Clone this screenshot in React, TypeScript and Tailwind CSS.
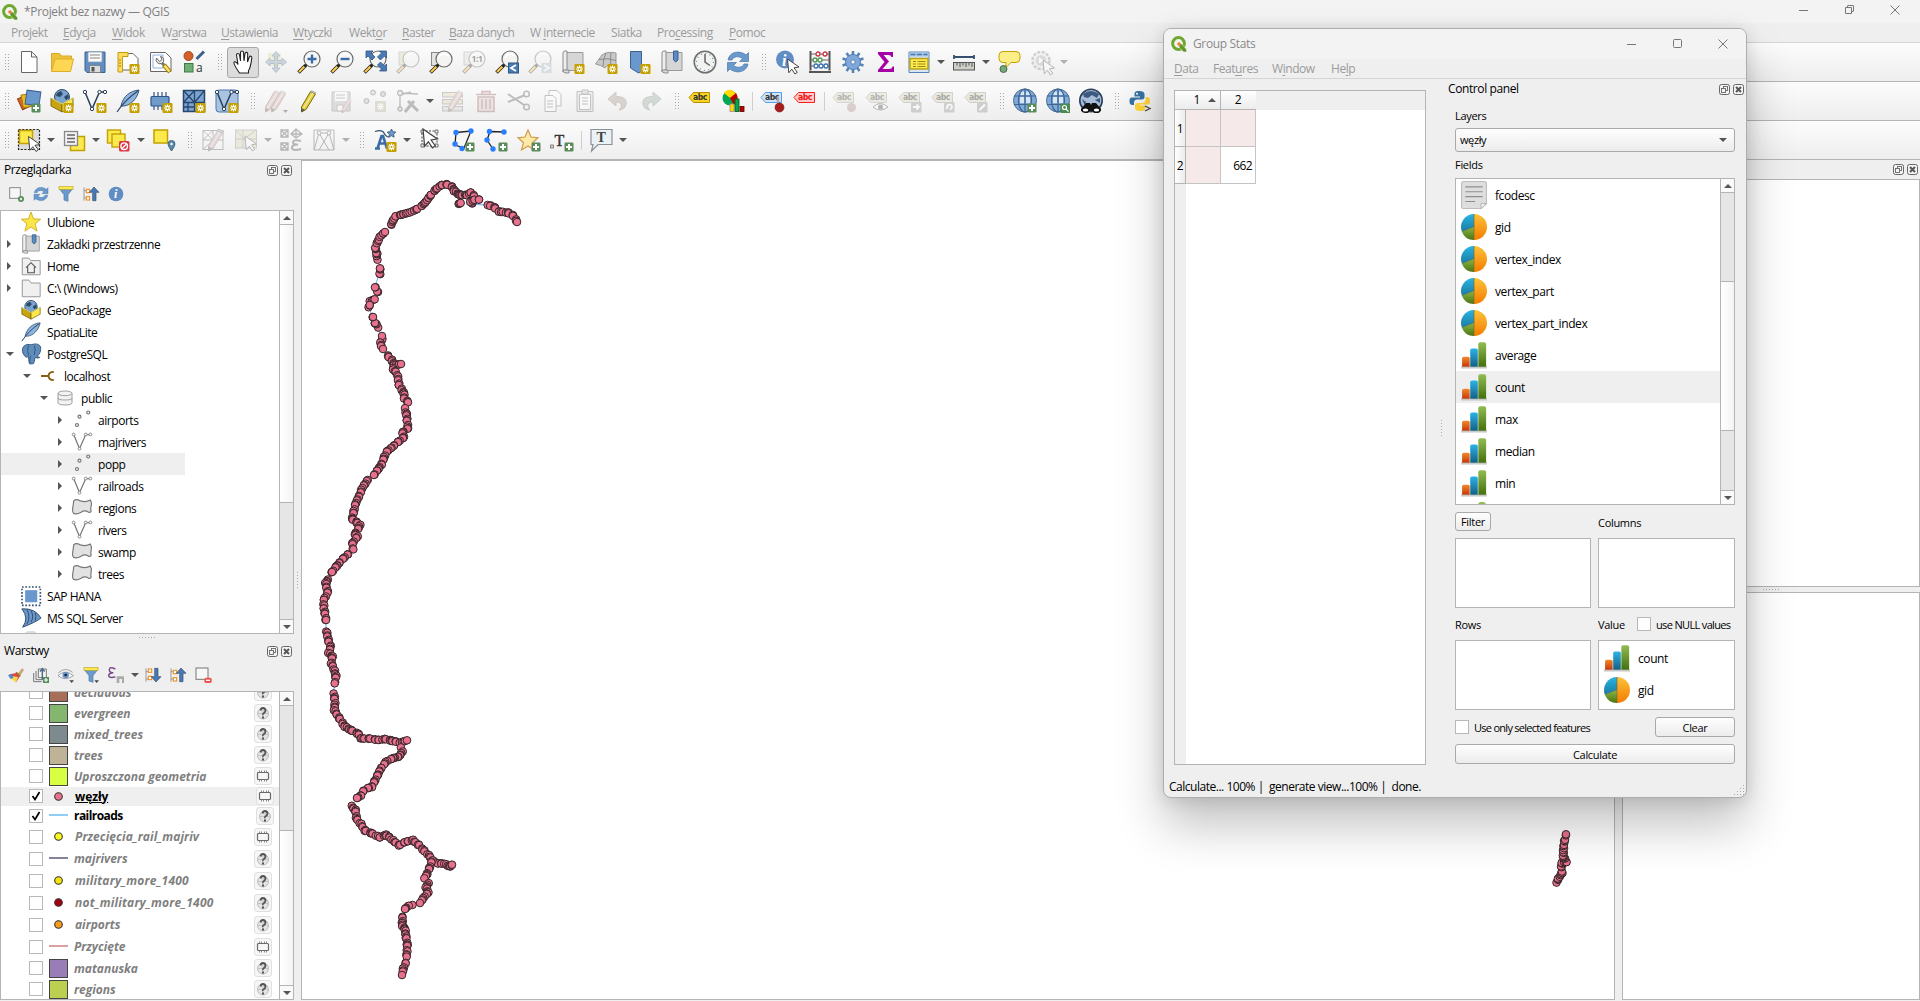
import React from 'react';

type Kids = { children?: React.ReactNode };

/* ---------- shared icon parts (24 unit grid) ---------- */

const StarBadge = () => (
  <g>
    <rect x="13.500" y="14" width="10" height="10" rx="1.200" fill="#c4a000" />
    <path d="M18.500 15.500v7M15 19h7M16 16.500l5 5M21 16.500l-5 5" stroke="#fff" strokeWidth="1.200" />
    <circle cx="18.500" cy="19" r="1" fill="#c4a000" />
  </g>
);
const PlusBadge = () => (
  <g>
    <rect x="14.500" y="14.500" width="9" height="9" rx="1.200" fill="#5a8c5a" />
    <path d="M19 16v6M16 19h6" stroke="#fff" strokeWidth="2" />
  </g>
);
const Lens = () => (
  <g>
    <circle cx="15" cy="9" r="8" fill="#f4f4f2" stroke="#6a6c69" strokeWidth="1.2" />
    <path d="M10 8a5.500 5.500 0 0 1 9.500-2" stroke="#fff" strokeWidth="1.500" fill="none" />
    <path d="M1.500 22.500l7-7" stroke="#222" strokeWidth="3.600" />
    <path d="M2 22l5.500-5.500" stroke="#fcc84a" strokeWidth="2.200" />
    <circle cx="8.500" cy="15.500" r="1.500" fill="#222" />
  </g>
);
const Cursor = ({ x = 0, y = 0 }: { x?: number; y?: number }) => (
  <path transform={`translate(${x} ${y})`} d="M0 0l11.500 8-5 .8 3.300 4.600-2.300 1.600-3.200-4.800-3 3.600z" fill="#fff" stroke="#444" strokeWidth="1" />
);
const Pencil = ({ fill = '#e6cf3c', edge = '#7a6a10' }: { fill?: string; edge?: string }) => (
  <g>
    <path d="M13.500 2.500l5 2.500-9.500 15.500-4.500 2.500 0-5z" fill={fill} stroke={edge} strokeWidth="1" />
    <path d="M16 4L6.500 19" stroke="#fff" strokeWidth="1.200" opacity=".6" />
    <path d="M4.500 23l0-4 3.500 2z" fill="#555" />
    <path d="M13.500 2.500l1-1.500 5 2.500-1 1.500z" fill="#bbb" />
  </g>
);
const Globe = () => (
  <g>
    <circle cx="12" cy="11.500" r="11.500" fill="#7ea9d8" stroke="#4a6f98" strokeWidth="1" />
    <path d="M7 8h4v6H7zM13 8h4v6h-4zM7 2.500h4V6H7zM13 2.500h4V6h-4z" fill="#d6e6f6" />
    <path d="M12 0v23M1 7h22M1 15.500h22" stroke="#3f6590" strokeWidth="1.200" />
    <ellipse cx="12" cy="11.500" rx="6.500" ry="11.500" fill="none" stroke="#3f6590" strokeWidth="1.200" />
  </g>
);
const Tag = ({ fill, edge, ink = '#333', label = 'abc' }: { fill: string; edge: string; ink?: string; label?: string }) => (
  <g>
    <path d="M1 8.500l4.500-5h16v10h-16z" fill={fill} stroke={edge} strokeWidth="1" />
    <text x="5" y="11.300" fontSize="8" fontWeight="700" fill={ink} fontFamily="DejaVu Sans" textLength="14" lengthAdjust="spacingAndGlyphs">{label}</text>
  </g>
);
const Swoosh = () => (
  <g fill="#6a99cc" stroke="#4a79ac" strokeWidth=".7">
    <path d="M2 10C3 4 9 1 15 2.500c2 .5 4 1.500 5 2.500l2.500-2.500v9h-9L16.500 8.500c-4-3-9-2-10.500 1.500z" />
    <path d="M22 14c-1 6-7 9-13 7.500-2-.5-4-1.500-5-2.500L1.500 21.500v-9h9L7.500 15.500c4 3 9 2 10.500-1.500z" />
  </g>
);
const Box = () => (
  <g>
    <circle cx="12" cy="8" r="7.500" fill="#7aa3d0" stroke="#2d4a68" />
    <path d="M7 4l4-2 2 3-3 3-4-1zM14 8l4-3 1 4-3 2z" fill="#2d4a68" />
    <path d="M1 9l11 6v8L1 17z" fill="#c8a510" stroke="#7a6508" strokeWidth=".9" />
    <path d="M23 9l-11 6v8l11-6z" fill="#fbe94e" stroke="#7a6508" strokeWidth=".9" />
    <path d="M1 9l11 6 11-6" fill="none" stroke="#fff8a8" strokeWidth=".8" />
  </g>
);
const Vee = ({ c = '#2b4058' }: { c?: string }) => (
  <g>
    <path d="M2 3l7 17 7.500-17h6" fill="none" stroke={c} strokeWidth="1.500" />
    {[[2, 3], [9, 20], [16.500, 3], [22, 3]].map(([x, y]) => (
      <circle key={x} cx={x} cy={y} r="1.700" fill="#fff" stroke={c} strokeWidth="1" />
    ))}
  </g>
);
const Feather = () => (
  <g>
    <path d="M23 1C14 2 7 7 5 17l3 0C15 16 21 10 23 1z" fill="#8db4de" stroke="#2d4a68" strokeWidth=".9" />
    <path d="M22 2C13 8 7 14 1 23" fill="none" stroke="#2d4a68" strokeWidth="1.200" />
  </g>
);
const Chip = () => (
  <g>
    <path d="M5 3v5M9 3v5M13 3v5M17 3v5M5 16v5M9 16v5M13 16v5M17 16v5M21 3" stroke="#2d5585" strokeWidth="1.200" />
    <rect x="2" y="7.500" width="18" height="9.500" rx="1" fill="#6f9bcb" stroke="#2d5585" strokeWidth="1.200" />
  </g>
);
const Filter = () => (
  <g>
    <path d="M2 4h20l-7 9v10l-6-2v-8z" fill="#6a99cc" stroke="#4a79ac" />
    <rect x="1.500" y="1" width="21" height="4" fill="#fbe94e" stroke="#b9a31c" strokeWidth=".9" />
  </g>
);
const Book = ({ mark = true }: { mark?: boolean }) => (
  <g>
    <path d="M5 2.500h17v18H5z" fill="#d6d6d6" stroke="#9a9a9a" />
    <path d="M2 3q0-2 2-2h2v19q-4 0-4 2z" fill="#eee" stroke="#8a8a8a" />
    <path d="M2 20q0 3 3 3h3v-3z" fill="#ddd" stroke="#8a8a8a" />
    {mark && <path d="M13.500 1H18v9l-2.200 2-2.300-2z" fill="#5b8bc4" stroke="#3a628f" />}
  </g>
);

const ICONS: Record<string, React.ReactNode> = {
  newdoc: <path d="M4.500 1.500h10l5.500 5.500v15.500H4.500zM14.500 1.500V7H20" fill="#fff" stroke="#666" />,
  open: <><path d="M1.500 20.500V3.500h8l2 2.500h10v4" fill="#eac33a" stroke="#d9a92c" /><path d="M1.500 21.500L5 9h18.500l-3 12.500z" fill="#fdd653" stroke="#e0ac2a" /></>,
  save: <><path d="M2 2h20v20.500H4L2 20.500z" fill="#5f8dc4" stroke="#3c618e" /><path d="M5 2h14v10H5z" fill="#fafafa" stroke="#8a9cb0" strokeWidth=".8" /><path d="M7 5h10M7 8h10" stroke="#888" /><path d="M6.500 15.500h11v7h-11z" fill="#dcdcdc" stroke="#777" strokeWidth=".8" /><path d="M8.500 17h3v4.500h-3z" fill="#555" /></>,
  newlayout: <><path d="M5 3.500h12l5 5V20H5z" fill="#fff" stroke="#666" /><path d="M2 2.500h10v4H6.500V22H2z" fill="#fbdc5c" stroke="#c79a14" /><path d="M3 10h2M3 13h2M3 16h2" stroke="#a47c08" /><StarBadge /></>,
  layouts: <><path d="M1.500 2.500h15l5.500 5.500v13.500H1.500z" fill="#fff" stroke="#666" /><path d="M4 5h10v13H4z" fill="none" stroke="#8fb2dd" /><path d="M13 13l3 3" stroke="#777" strokeWidth="3" /><path d="M15 15l6 7" stroke="#a4820c" strokeWidth="4.500" /><path d="M15.500 15.500l5 6" stroke="#fbe36a" strokeWidth="2.400" /><path d="M7.500 8a4 4 0 0 0 5 5.500l2-2a4.200 4.200 0 0 0-3-5l1.500 3-2.500 2z" fill="#ececec" stroke="#666" /></>,
  style: <><circle cx="6.500" cy="6" r="4.500" fill="#d4602c" stroke="#a4431a" /><path d="M14.500 9L22 1.500" stroke="#3a628f" strokeWidth="3" /><rect x="2.500" y="13.500" width="8.500" height="8.500" fill="#6fae74" stroke="#3f7a45" /><text x="14" y="22" fontSize="12" fill="#333" fontFamily="Open Sans">a</text></>,
  hand: <path d="M8.500 23C5 18 2.500 14 3 12.500s2.500-.5 4 2L5.500 5c0-2 2.500-2 3 0l1 6V2.500c0-2 3-2 3 0L13 11l1-7.500c.5-1.800 3-1.300 2.700.500L16.500 12l1.800-5c.8-1.500 2.900-.8 2.500 1C20 14 19.500 18 17.500 20.500V23z" fill="#fff" stroke="#222" strokeWidth="1.100" />,
  pan: <g opacity=".4"><rect x="4" y="3" width="13" height="13" fill="#e5dcae" /><path d="M12 1.500l4 4.500h-2.500v4.500H18V8l4.500 4-4.500 4v-2.500h-4.500V18H16l-4 4.500L8 18h2.500v-4.500H6V16l-4.500-4L6 8v2.500h4.500V6H8z" fill="#8fa2b8" stroke="#607890" /></g>,
  zoomin: <><Lens /><path d="M15 4.500v9M10.500 9h9" stroke="#3c6ca8" strokeWidth="2.400" /></>,
  zoomout: <><Lens /><path d="M10.500 9h9" stroke="#3c6ca8" strokeWidth="2.400" /></>,
  zoomfull: <><Lens /><path d="M3 1h7L8 3l4 4-3 3-4-4-2 2zM23.500 1v7l-2-2-4 4-3-3 4-4-2-2zM23.500 21h-7l2-2-4-4 3-3 4 4 2-2z" fill="#4a7ab4" stroke="#2d5585" strokeWidth=".8" /></>,
  zoomsel: <g opacity=".35"><rect x="3" y="2" width="13" height="13" fill="#ddd6ac" stroke="#999" /><Lens /></g>,
  zoomlayer: <><rect x="2.500" y="2.500" width="12" height="13" fill="#e4e4e4" stroke="#888" /><Lens /></>,
  zoomnative: <g opacity=".35"><rect x="2" y="2" width="13" height="13" fill="#ddd" stroke="#999" /><Lens /><text x="9.500" y="12" fontSize="8.500" fontWeight="700" fontFamily="Open Sans">1:1</text></g>,
  zoomprev: <><Lens /><rect x="13.500" y="13" width="10" height="10" fill="#4a7ab4" stroke="#2d5585" /><path d="M21 15l-5 3 5 3" fill="none" stroke="#fff" strokeWidth="1.800" /></>,
  zoomnext: <g opacity=".35"><Lens /><rect x="13.500" y="13" width="10" height="10" fill="#aab4be" /><path d="M16 15l5 3-5 3" fill="none" stroke="#fff" strokeWidth="1.800" /></g>,
  newmap: <><Book mark={false} /><StarBadge /></>,
  new3d: <><path d="M1.500 14L8 5q5-4 14-2v13q-8-4-11 2-4-3-9.500-4z" fill="#c9c9c9" stroke="#999" /><path d="M5 9.500q8-2 17 1M12 3q-3 6-3 13M17 3q-1 6 0 12" fill="none" stroke="#8a8a8a" /><StarBadge /></>,
  bookmarknew: <><path d="M3.500 1.500h11v20l-3 1.500-8-5z" fill="#6a97cc" stroke="#3c618e" /><StarBadge /></>,
  bookmarks: <Book />,
  clock: <><circle cx="12" cy="12" r="10.800" fill="#f2f2f0" stroke="#6d6d6d" strokeWidth="1.500" /><path d="M12 4v8l5 3.500" fill="none" stroke="#666" strokeWidth="1.500" /><circle cx="12" cy="12" r="8.500" fill="none" stroke="#5b8bc4" strokeWidth="1.200" strokeDasharray="1 3.450" /></>,
  refresh: <Swoosh />,
  identify: <><circle cx="10" cy="9.500" r="9" fill="#5f8dc4" /><text x="7" y="15.500" fontSize="16" fontStyle="italic" fontWeight="700" fill="#fff" fontFamily="Liberation Serif">i</text><Cursor x={12.500} y={9} /></>,
  abacus: <><path d="M2.500 1v19.500M21.500 1v19.500M1 22h22" stroke="#555" strokeWidth="2" /><path d="M3 4h18M3 10h18M3 16h18" stroke="#666" /><g fill="#fff" strokeWidth="1.300"><g stroke="#cc3340"><circle cx="10" cy="4" r="2" /><circle cx="17" cy="4" r="2" /></g><g stroke="#4a9a50"><circle cx="7" cy="10" r="2" /><circle cx="12" cy="10" r="2" /></g><g stroke="#3a72b0"><circle cx="8" cy="16" r="2" /><circle cx="13" cy="16" r="2" /><circle cx="18" cy="16" r="2" /></g></g></>,
  gear: <><g stroke="#5583b8" strokeWidth="2.600">{[0, 36, 72, 108, 144].map((a) => <path key={a} d="M12 1v22" transform={`rotate(${a} 12 12)`} />)}</g><circle cx="12" cy="12" r="7.500" fill="#7fa8d8" stroke="#5583b8" /><circle cx="12" cy="12" r="2.200" fill="#f5f5f5" stroke="#5583b8" /></>,
  sigma: <path d="M4 2h15v5h-1.500q-.5-2-3-2H9.500l5.500 6.500L8.500 19H15q3 0 3.500-2.500H20V22H4v-2l6.500-8L4 4z" fill="#a500a5" />,
  table: <><path d="M2 2h20v20.500H2z" fill="#d8e6f4" stroke="#5583b8" /><path d="M2.500 2.500h19v4h-19z" fill="#a6c6e8" /><path d="M3.500 4.500h5M10 4.500h5M16.500 4.500h4" stroke="#4a79ac" strokeWidth="1.400" /><path d="M3 8.500h18V19H3z" fill="#fbe94e" stroke="#b9a31c" strokeWidth="1.500" /><path d="M6 11.500h3M10.500 11.500h8M6 14h3M10.500 14h8M6 16.500h3M10.500 16.500h8" stroke="#a08a10" /></>,
  measure: <><path d="M2 7h20M2 5v4M22 5v4" stroke="#34506e" strokeWidth="1.800" /><rect x="1.500" y="12.500" width="21" height="7.500" fill="#cfcfc8" stroke="#555" /><path d="M5 12.500v3M8 12.500v4.500M11 12.500v3M14 12.500v4.500M17 12.500v3M20 12.500v4.500" stroke="#555" /></>,
  tip: <><path d="M6 1.500h13q4 0 4 4v3q0 4-4 4h-5l-5 5v-5H6q-4 0-4-4v-3q0-4 4-4z" fill="#fcee86" stroke="#c4a000" /><circle cx="6.500" cy="19" r="3.500" fill="#74a878" stroke="#4a6a4a" /></>,
  action: <g opacity=".35"><circle cx="11" cy="10.500" r="8.500" fill="#eee" stroke="#888" strokeWidth="2.500" strokeDasharray="3 1.500" /><circle cx="11" cy="10.500" r="5.500" fill="#aaa" /><path d="M9 7.500l5 3-5 3z" fill="#fff" /><Cursor x={13} y={10} /></g>,

  dsm: <><rect x="2.500" y="7" width="12" height="12" fill="#d8622c" stroke="#9a3e14" transform="rotate(-25 8 13)" /><rect x="5" y="5" width="13" height="13" fill="#eab822" stroke="#a47c08" transform="rotate(-10 11 11)" /><rect x="9" y="2" width="14" height="14" fill="#6a97cc" stroke="#3c618e" transform="rotate(8 16 9)" /><PlusBadge /></>,
  gpkg: <><Box /><StarBadge /></>,
  shp: <><Vee /><StarBadge /></>,
  spatialite: <><Feather /><StarBadge /></>,
  memory: <><Chip /><StarBadge /></>,
  mesh: <><rect x="1.500" y="1.500" width="21" height="21" fill="#7ba4d4" stroke="#26466a" strokeWidth="1.500" /><path d="M1.500 13.500h21M12.500 1.500v21M1.500 1.500l11 12M12.500 1.500l-11 12M12.500 13.500l10-12M6 13.500v9M1.500 18h11" stroke="#26466a" strokeWidth="1.300" fill="none" /><StarBadge /></>,
  vlayer: <><rect x="1" y="1" width="22" height="22" rx="3" fill="#a9c4e2" stroke="#4a79ac" /><Vee /><StarBadge /></>,
  edits: <g opacity=".35"><g transform="translate(-3 0)"><Pencil fill="#c9a6a0" edge="#8a6a66" /></g><g transform="translate(3 0)"><Pencil fill="#c9a6a0" edge="#8a6a66" /></g><path d="M19 21h5l-2.500 3z" fill="#333" /></g>,
  edit: <Pencil />,
  saveedit: <g opacity=".3"><path d="M2 3h18v19H2z" fill="#aaa" stroke="#666" /><path d="M5 3h12v9H5z" fill="#fff" /><path d="M6 6h9M6 9h9M7 16h6v6H7z" stroke="#666" fill="#fff" /><g transform="translate(9 9) scale(.65)"><Pencil fill="#c99" edge="#866" /></g></g>,
  addpt: <g opacity=".35"><circle cx="10" cy="3.500" r="2.500" fill="#bbb" stroke="#555" /><circle cx="20" cy="5" r="2.500" fill="#bbb" stroke="#555" /><circle cx="3.500" cy="12" r="2.500" fill="#bbb" stroke="#555" /><rect x="12" y="12" width="11" height="11" rx="1" fill="#b8b09a" /><path d="M17.500 14v7M14 17.500h7M15 15l5 5M20 15l-5 5" stroke="#fff" strokeWidth="1.200" /></g>,
  vertex: <g opacity=".35" fill="none" stroke="#555" strokeWidth="1.300"><path d="M4 2v19M4 4l18 1M4 6l11-3" /><circle cx="4" cy="4" r="2.500" fill="#ddd" /><circle cx="4" cy="20" r="2" fill="#ddd" /><path d="M9 23l9-11M12 12l10 10" strokeWidth="3" /></g>,
  multiedit: <g opacity=".3"><rect x="1.500" y="3.500" width="20" height="4.500" fill="#d8cfa0" stroke="#666" /><rect x="1.500" y="10.500" width="20" height="4.500" fill="#d8cfa0" stroke="#666" /><rect x="1.500" y="17.500" width="20" height="4.500" fill="#ccc" stroke="#666" /><g transform="translate(3 0)"><Pencil fill="#c99" edge="#866" /></g></g>,
  trash: <g opacity=".3" stroke="#844" fill="#d8c0be"><path d="M2 5.500h20M8 5V2.500h8V5M4 8h16v14.500H4zM8 10v10M12 10v10M16 10v10" strokeWidth="1.500" /></g>,
  cut: <g opacity=".35" fill="none" stroke="#555" strokeWidth="1.500"><path d="M1 5l16 11M1 13l17-7" strokeWidth="2" /><circle cx="19.500" cy="5" r="2.800" /><circle cx="19.500" cy="18" r="2.800" /></g>,
  copy: <g opacity=".4" fill="#fff" stroke="#777"><path d="M9 1.500h8l4 4V17H9z" /><path d="M5 6.500h8l3 3v13H5z" /><path d="M7 12h6M7 15h6M7 18h6" /></g>,
  paste: <g opacity=".4" fill="#fff" stroke="#777"><path d="M4 2.500h16v20H4z" fill="#ddd" /><path d="M6.500 5.500h11v15h-11z" /><path d="M9 1h6v4H9z" fill="#ccc" /><path d="M9 9h6M9 12h6M9 15h6" /></g>,
  undo: <path opacity=".35" d="M2 10l8-7v4.500c8 0 11 3 10 8-.5 3-3 5-7 5.500 3-2 4-8-3-8V17z" fill="#a89488" stroke="#8a7468" />,
  redo: <path opacity=".35" d="M22 10l-8-7v4.500c-8 0-11 3-10 8 .5 3 3 5 7 5.500-3-2-4-8 3-8V17z" fill="#96a89a" stroke="#748a78" />,
  label: <Tag fill="#f5d522" edge="#b98f00" />,
  diagram: <><circle cx="9" cy="9" r="7.500" fill="#00a651" /><path d="M9 9L3 4q3-4 8-3l4 4z" fill="#ffd900" /><path d="M9 9l6-5q4 6-2 12z" fill="#c00000" /><g strokeWidth=".8"><rect x="9" y="15" width="4" height="7.500" fill="#ffd900" stroke="#a88" /><rect x="14" y="10" width="4" height="12.500" fill="#00a651" stroke="#050" /><rect x="19" y="17.500" width="4" height="5" fill="#c00000" stroke="#500" /></g></>,
  labelpin: <><Tag fill="#cfe4fb" edge="#5a9be8" /><path d="M18 8v10" stroke="#aaa" strokeWidth="2.500" /><circle cx="19.500" cy="18.500" r="4.500" fill="#a81c1c" stroke="#7a1010" strokeWidth=".6" /></>,
  labelred: <Tag fill="#ffc9c9" edge="#ff1a1a" ink="#ee1111" />,
  g1: <g opacity=".35"><Tag fill="#ddd6b8" edge="#999" /><circle cx="19.500" cy="18.500" r="4.500" fill="#a88" /></g>,
  g2: <g opacity=".35"><Tag fill="#ddd6b8" edge="#999" /><path d="M8 18q7-7 15 0-8 6-15 0z" fill="#fff" stroke="#444" /><circle cx="15.500" cy="18" r="2.500" fill="#444" /></g>,
  g3: <g opacity=".4"><Tag fill="#ddd6b8" edge="#999" /><rect x="13" y="13" width="10.500" height="10.500" rx="1" fill="#999" /><path d="M15 18h6M18.500 15.500l2.500 2.500-2.500 2.500" stroke="#fff" strokeWidth="1.800" fill="none" /></g>,
  g4: <g opacity=".4"><Tag fill="#ddd6b8" edge="#999" /><rect x="13" y="13" width="10.500" height="10.500" rx="1" fill="#999" /><path d="M16 18a2.500 2.500 0 1 1 2.500 2.500M15 20l2.500-3" stroke="#fff" strokeWidth="1.700" fill="none" /></g>,
  g5: <g opacity=".4"><Tag fill="#ddd6b8" edge="#999" /><rect x="13" y="13" width="10.500" height="10.500" rx="1" fill="#999" /><path d="M15.500 21l5.500-5.500" stroke="#fff" strokeWidth="2.200" /></g>,
  globeadd: <><Globe /><PlusBadge /></>,
  globefind: <><Globe /><rect x="14.500" y="14.500" width="9.500" height="9.500" fill="#4a8a50" /><circle cx="18.500" cy="18.500" r="2" fill="none" stroke="#fff" strokeWidth="1.200" /><path d="M20 20l2.500 2.500" stroke="#fff" strokeWidth="1.300" /></>,
  globebino: <><circle cx="12" cy="11.500" r="11.200" fill="#a8bdd8" stroke="#2a3f5c" strokeWidth="1.600" /><path d="M4 5q8-6 16 0l-2 4-5-3-4 3-4-1zM3 10l4 3-1 4zM16 11l5-2 0 5z" fill="#3c5a80" /><path d="M7 14h4l1 2 1-2h4l5 6v2H2v-2z" fill="#111" /><ellipse cx="6.500" cy="21" rx="3.500" ry="2.300" fill="#fff" stroke="#111" strokeWidth="1.600" /><ellipse cx="17.500" cy="21" rx="3.500" ry="2.300" fill="#fff" stroke="#111" strokeWidth="1.600" /></>,
  python: <><path d="M11 2c-4 0-4.500 1.500-4.500 3v2.500H12v1H4C1.500 8.500 1.500 11 1.500 12c0 2 .5 4 3 4H6v-2.500c0-2 1.500-3 3-3h5c1.500 0 2.500-1 2.500-2.500V5c0-2-2-3-5.500-3z" fill="#3572a5" /><path d="M12.500 22c4 0 5-1.500 5-3v-2.500H12v-1h7.500c2.500 0 2.500-2.500 2.500-3.500 0-2-.5-4-3-4h-1.500V11c0 2-1.500 3-3 3h-5C8 14 7 15 7 16.500V19c0 2 2 3 5.500 3z" fill="#ffd43b" /><circle cx="9" cy="4.800" r="1" fill="#fff" /><path d="M17 17l5 2.500-5 2.500" fill="none" stroke="#444" strokeWidth="1.300" /></>,

  select: <><rect x="1.500" y="1.500" width="21" height="20" fill="#dcdcdc" stroke="#222" strokeWidth="1.200" strokeDasharray="2.200 1.400" /><rect x="2.500" y="2.500" width="13" height="13" fill="#fbe94e" stroke="#c4a000" strokeWidth="1.500" /><Cursor x={11.500} y={8.500} /></>,
  selform: <><rect x="8.500" y="8.500" width="14" height="14" fill="#fbe94e" stroke="#c4a000" strokeWidth="1.500" /><rect x="2.500" y="3.500" width="13" height="14" fill="#f2f2f2" stroke="#888" strokeWidth="1.300" /><path d="M5 7h8M5 10.500h8M5 14h8" stroke="#666" strokeWidth="1.300" /></>,
  desel: <><rect x=".5" y="2" width="13" height="13" fill="#fbe94e" stroke="#c4a000" strokeWidth="1.400" /><rect x="5" y="6" width="13" height="13" fill="#fbe94e" stroke="#c4a000" strokeWidth="1.400" /><rect x="12" y="13" width="10.500" height="10.500" rx="1.500" fill="#dc3545" /><circle cx="17.200" cy="18.200" r="3.300" fill="none" stroke="#fff" strokeWidth="1.400" /><path d="M15 20.500l4.500-4.500" stroke="#fff" strokeWidth="1.400" /></>,
  selloc: <><rect x="2" y="2" width="13.500" height="13" fill="#fbe94e" stroke="#c4a000" strokeWidth="1.500" /><path d="M19.500 23q-3.500-5-3.500-7a3.500 3.500 0 0 1 7 0q0 2-3.500 7z" fill="#5d89a8" stroke="#3f6a88" /><circle cx="19.500" cy="16" r="1.200" fill="#fff" /></>,
  e1: <g opacity=".3" fill="none" stroke="#444"><rect x="2" y="2.500" width="20" height="19" /><path d="M2 12h20M12 2.500v19M2 2.500l10 9.500M12 2.500L2 12M12 12L2 21.500" /><g transform="translate(3 0)"><Pencil fill="#b99" edge="#866" /></g></g>,
  e2: <g opacity=".35"><rect x="1.500" y="2" width="21" height="18" fill="#d8d4b0" stroke="#888" /><path d="M1.500 11h21M9 2v18M1.500 2l18 18M22 2L9 12" stroke="#888" fill="none" /><Cursor x={11} y={8} /></g>,
  e3: <g opacity=".35" fill="none" stroke="#444" strokeWidth="1.300"><path d="M2 2h7v7H2zM2 2l7 7M9 2L2 9M2 15h7v7H2zM2 15l7 7M9 15l-7 7M17 1l6 5-6 4-5-4zM17 1v9M12 6h11" /><path d="M22 13q-8-2-8 1.500 0 2 5 2-6 0-6 3 0 4 9 1.500" strokeWidth="2" /></g>,
  e4: <g opacity=".35" fill="none" stroke="#444"><path d="M2 2h20v20H2zM2 22L7 5l10 17M7 5h10l5 17M17 5L7 22" /><circle cx="7" cy="5" r="2" fill="#eee" /><circle cx="17" cy="5" r="2" fill="#eee" /></g>,
  annot: <><path d="M2 3.500q7-2.500 9 1.500t5 4" fill="none" stroke="#34506e" strokeWidth="1.200" /><path d="M18.500 1l1.300 2.700 3 .4-2.200 2.100.5 3-2.600-1.500-2.600 1.500.5-3L14.200 4.100l3-.4z" fill="#6a97cc" stroke="#34506e" strokeWidth=".8" /><path d="M2 20.500h5M4.500 20.500L8.500 8h1.500l4 12.500M6 15.500h6.500" fill="none" stroke="#3c6ca8" strokeWidth="2.600" /><StarBadge /></>,
  annsel: <><rect x="4" y="3" width="15" height="15" fill="none" stroke="#444" strokeDasharray="2 1.500" /><path d="M3 2h3v3H3zM17 2h3v3h-3zM3 16h3v3H3zM17 16h3v3h-3z" fill="#eee" stroke="#555" strokeWidth=".8" /><g transform="translate(5 1) scale(1.250)"><Cursor /></g></>,
  annpoly: <><path d="M5 4.500L20 3l-7 17-9-3z" fill="#f6f6f6" stroke="#222" strokeWidth="1.300" /><g fill="#2a7fff"><circle cx="5" cy="4.500" r="2.700" /><circle cx="20" cy="3" r="2.700" /><circle cx="4" cy="16" r="2.700" /><circle cx="11" cy="20.500" r="2.700" /></g><PlusBadge /></>,
  annline: <><path d="M20 4L6 3.500 3 12l6 9" fill="none" stroke="#222" strokeWidth="1.300" /><g fill="#2a7fff"><circle cx="5.500" cy="3.500" r="2.700" /><circle cx="20" cy="4" r="2.700" /><circle cx="3" cy="12" r="2.700" /><circle cx="9" cy="21" r="2.700" /></g><PlusBadge /></>,
  annstar: <><path d="M11 2l3 7 7 .8-5.500 5 1.800 7.200L11 18l-6.500 4 2-7.200L1 9.800 8 9z" fill="#fdeaa8" stroke="#d29a4a" strokeWidth="1.200" /><PlusBadge /></>,
  anntext: <><rect x=".5" y="17" width="3" height="3" fill="#ccc" stroke="#777" strokeWidth=".8" /><text x="4.500" y="18" fontSize="16" fill="#333" stroke="#333" strokeWidth=".4" fontFamily="Liberation Serif">T</text><PlusBadge /></>,
  balloon: <><path d="M2 1.500h21v15H9L2.500 23l1.500-6.500H2z" fill="#eaf2f6" stroke="#8a9298" strokeWidth="1.200" /><text x="7.500" y="14" fontSize="14" fontWeight="700" fill="#444" fontFamily="Liberation Serif">T</text></>,

  /* dock toolbars */
  addsel: <><rect x="2.500" y="2.500" width="16" height="16" fill="#f7f7f7" stroke="#888" strokeWidth="1.500" /><circle cx="19.500" cy="19.500" r="4.500" fill="#5a8c5a" /><circle cx="19.500" cy="19.500" r="1.800" fill="#e8f0e8" /></>,
  filter: <Filter />,
  filterdrop: <><Filter /><path d="M17 20h7l-3.500 4z" fill="#444" /></>,
  collapse: <><path d="M1.500 2v20M1.500 7h6M1.500 18h6" stroke="#888" strokeWidth="1.200" /><rect x="5" y="5" width="5" height="5" fill="#fff" stroke="#f08c1c" strokeWidth="1.600" /><rect x="5" y="16" width="5" height="5" fill="#fff" stroke="#f08c1c" strokeWidth="1.600" /><path d="M16.500 1.500l7.500 8h-4.500V22h-5V9.500H9.500z" fill="#4a7ab4" stroke="#34506e" /></>,
  expand: <><path d="M1.500 2v20M1.500 7h6M1.500 18h6" stroke="#888" strokeWidth="1.200" /><rect x="5" y="3" width="5" height="5" fill="#fff" stroke="#f08c1c" strokeWidth="1.600" /><rect x="5" y="14" width="5" height="5" fill="#fff" stroke="#f08c1c" strokeWidth="1.600" /><path d="M16.500 22.500l7.500-8h-4.500V2h-5v12.500H9.500z" fill="#4a7ab4" stroke="#34506e" /></>,
  info: <><circle cx="12" cy="12" r="11" fill="#5f8dc4" /><text x="9" y="18" fontSize="18" fontStyle="italic" fontWeight="700" fill="#fff" fontFamily="Liberation Serif">i</text></>,
  brush: <><path d="M14 11l7-9 3 2-6 10z" fill="#c8a878" /><path d="M2 11l11-2 5 5-6 9z" fill="#e04848" /><path d="M7 14l8 1-3 8-8-5z" fill="#fbd64a" /><path d="M0 12l6-1 2 5-4 2z" fill="#4a8ad0" /><path d="M12 8l6 6" stroke="#a86a2a" strokeWidth="3" /></>,
  addgroup: <><path d="M1 9v13h12M4.500 6v13h13" fill="none" stroke="#777" strokeWidth="1.500" /><path d="M8 3h12v13H8z" fill="#f4f4f4" stroke="#777" strokeWidth="1.500" /><path d="M14 19V3M10.500 7L14 2.500 17.500 7" fill="none" stroke="#4a6a8a" strokeWidth="2.200" /><rect x="15" y="15" width="9" height="9" fill="#5a8c5a" /><path d="M19.500 16.500v6M16.500 19.500h6" stroke="#fff" strokeWidth="1.600" /></>,
  eye: <><path d="M0 13Q11 3 23 13 11 22 0 13z" fill="#fff" stroke="#888" strokeWidth="1.200" /><path d="M0 9Q11-1 22 8" fill="none" stroke="#999" strokeWidth="1.300" /><circle cx="11.500" cy="12" r="5" fill="#6a97cc" /><circle cx="11.500" cy="12" r="2" fill="#123" /><path d="M17 20h7l-3.500 4z" fill="#444" /></>,
  eps: <><path d="M11 3Q2-1 2 4t6 4.500Q1 9 1 13t10 2" fill="none" stroke="#7a4a8c" strokeWidth="2.200" /><path d="M13 14h11v10h-3v-6h-4v6h-4z" fill="#aaa" /></>,
  remove: <><rect x="1.500" y="1.500" width="18" height="17" fill="#f7f7f7" stroke="#777" strokeWidth="1.500" /><rect x="14" y="16" width="11" height="8" rx="2.500" fill="#ef5350" /><path d="M16.500 20h6" stroke="#fff" strokeWidth="2" /></>,

  /* browser tree */
  fav: <path d="M12 0l3 8.200 8.600.5-6.700 5.400 2.400 8.900L12 18l-7.300 5 2.400-8.900L.4 8.700 9 8.200z" fill="#fbe64a" stroke="#c8a418" />,
  home: <><path d="M1.500 2.500h8l2 3h11.500v17H1.500z" fill="#f0f0f0" stroke="#999" strokeWidth="1.200" /><path d="M6 14l6-6 6 6M8 13v7h8v-7" fill="none" stroke="#555" strokeWidth="1.300" /></>,
  folder: <path d="M1.500 2.500h8l2.500 3.500h11v16.500H1.500z" fill="#f0f0f0" stroke="#999" strokeWidth="1.200" />,
  gpkgs: <Box />,
  feather: <Feather />,
  pg: <><path d="M3 3q4-4 9-2 8-3 11.500 2 1 8-4.500 12l3.500 1q-2 2-5.500 0-1 6-2 7.500-3 1-5 0-1-5-1-8.500-3 2-4 0Q-.500 9 3 3z" fill="#5f8dbb" stroke="#34587e" strokeWidth="1.100" /><path d="M9 2q-2 5 0 12M16 2q2 5 0 11M11 23q-1-7 1-9" fill="none" stroke="#34587e" strokeWidth="1.200" /></>,
  conn: <path d="M0 12h12M22 5q-9 0-9 7t9 7" fill="none" stroke="#8b5a14" strokeWidth="3.200" />,
  db: <g fill="#f2f2f2" stroke="#8a8a8a" strokeWidth="1.200"><path d="M1.500 5v14q0 3.500 10.500 3.500t10.500-3.500V5" /><path d="M1.500 12q0 3 10.500 3t10.500-3" fill="none" /><ellipse cx="12" cy="5" rx="10.500" ry="3.500" /></g>,
  pts: <g fill="#f0f0f0" stroke="#777" strokeWidth="1.400"><circle cx="6" cy="18" r="1.800" /><circle cx="9" cy="8" r="1.800" /><circle cx="19.500" cy="3" r="1.800" /></g>,
  line: <Vee c="#777" />,
  poly: <path d="M2 3.500Q5 .5 10 3.500q7 2 12-1 2 3 1 7t0 6.500q-1 2-3 1-5-3-9 0-5 3-9 1.500Q0 17 1 11T2 3.500z" fill="#e2e2e2" stroke="#777" strokeWidth="1.400" />,
  hana: <><rect x="5" y="5" width="14.500" height="14.500" fill="#6a97cc" /><rect x="1.200" y="1.200" width="22" height="22" fill="none" stroke="#34506e" strokeWidth="2" strokeDasharray="2 2" /></>,
  mssql: <><path d="M1 1q16-1 23 11-6 5-22 11Q10 12 1 1z" fill="#6a97cc" stroke="#34506e" strokeWidth="1.200" /><path d="M7 1.500q5 9 0 18M12 3q4 8 0 14M17 6q2 4 0 9" fill="none" stroke="#34506e" strokeWidth="1.200" /></>,
  pie: <><defs><linearGradient id="pO" x2="0" y2="1"><stop stopColor="#fbc23a" /><stop offset="1" stopColor="#f57c00" /></linearGradient><linearGradient id="pB" x2="0" y2="1"><stop stopColor="#2bb4e2" /><stop offset="1" stopColor="#1a7aa6" /></linearGradient><linearGradient id="pG" x2="0" y2="1"><stop stopColor="#8ab84a" /><stop offset="1" stopColor="#4a7410" /></linearGradient></defs><path d="M12 0a12 12 0 0 1 0 24z" fill="url(#pO)" /><path d="M12 0a12 12 0 0 0-11.200 16.300L12 12z" fill="url(#pB)" /><path d="M.8 16.300A12 12 0 0 0 12 24V12z" fill="url(#pG)" /><path d="M12 0v24M12 12L.8 16.300" stroke="#7a6a20" strokeWidth=".6" /></>,
  bars: <><defs><linearGradient id="bO" x2="0" y2="1"><stop stopColor="#f58a2c" /><stop offset="1" stopColor="#c4380c" /></linearGradient><linearGradient id="bB" x2="0" y2="1"><stop stopColor="#2cb4e6" /><stop offset="1" stopColor="#145f84" /></linearGradient><linearGradient id="bG" x2="0" y2="1"><stop stopColor="#92bc54" /><stop offset="1" stopColor="#44700c" /></linearGradient></defs><path d="M0 22.500h24v2H0z" fill="#c8c8c8" /><path d="M1 22.800V15q0-1.500 1.500-1.500h4Q8 13.500 8 15v7.800z" fill="url(#bO)" /><path d="M8.500 22.800V7.500Q8.500 6 10 6h4q1.500 0 1.500 1.500v15.300z" fill="url(#bB)" /><path d="M16 22.800V2Q16 .2 17.500.2h4Q23.200.2 23.200 2v20.800z" fill="url(#bG)" /></>,
  note: <><path d="M2.500-.5h19q2 0 2 2V20l-5 4.500h-16q-2 0-2-2v-21q0-2 2-2z" fill="#dedede" stroke="#bdbdbd" /><path d="M4 4.500h16M4 9h16M4 13.500h16M4 18h9" stroke="#8e8e8e" strokeWidth="1.100" /><path d="M18.500 24.500V20h5z" fill="#fafafa" stroke="#aaa" strokeWidth=".8" /></>,
};

const Icon = ({ n, s = 'size-6' }: { n: string; s?: string }) => (
  <svg viewBox="0 0 24 24" className={`${s} shrink-0 overflow-visible`}>{ICONS[n]}</svg>
);

const QLogo = () => (
  <svg viewBox="0 0 16 16" className="size-4 shrink-0">
    <circle cx="7.500" cy="7.500" r="5.900" fill="none" stroke="#6fa82e" strokeWidth="3" />
    <path d="M8 8l3 0 4.500 5.500V16h-3L8 11z" fill="#5f9a28" stroke="#f3f3f3" strokeWidth=".5" />
    <circle cx="8" cy="8" r="1.800" fill="#f08030" />
  </svg>
);

/* ---------- small widgets ---------- */

const ArrowDown = ({ c = '#555' }: { c?: string }) => (
  <svg viewBox="0 0 8 4" className="h-1 w-2 shrink-0"><path d="M0 0h8L4 4z" fill={c} /></svg>
);
const ArrowUp = () => (
  <svg viewBox="0 0 8 4" className="h-1 w-2 shrink-0"><path d="M0 4h8L4 0z" fill="#555" /></svg>
);

const Grip = ({ vertical = true, cls = '' }: { vertical?: boolean; cls?: string }) => (
  <div className={`${vertical ? 'h-[17px] w-px bg-[repeating-linear-gradient(180deg,#a8a8a8_0_1px,transparent_1px_3px)]' : 'h-px w-[17px] bg-[repeating-linear-gradient(90deg,#a8a8a8_0_1px,transparent_1px_3px)]'} ${cls}`} />
);

const Handle = ({ first = false }: { first?: boolean }) => (
  <div className={`flex shrink-0 gap-[2px] ${first ? 'w-[12px] pl-[5px]' : 'w-4 pl-2'}`}>
    <Grip /><Grip />
  </div>
);

const Toolbar = ({ items }: { items: string }) => (
  <div className="flex h-[39px] shrink-0 items-center border-b border-[#b4b4b4] bg-linear-to-b from-[#fcfcfc] to-[#eeeeee]">
    <Handle first />
    {items.split(' ').map((it, i) => {
      if (it === '#') return <Handle key={i} />;
      if (it === '|') return <div key={i} className="flex w-[6px] shrink-0 justify-center"><div className="h-[19px] w-px bg-[#cfcfcf]" /></div>;
      if (it === 'v' || it === 'w') return <div key={i} className="flex w-3 shrink-0 justify-center"><ArrowDown c={it === 'v' ? '#555' : '#b0b0b0'} /></div>;
      if (it === 'hand') return <div key={i} className="flex h-[31px] w-[33px] shrink-0 items-center justify-center"><div className="flex h-[31px] w-8 items-center justify-center rounded-[3px] border border-[#a6a6a6] bg-[#dcdcdc]"><Icon n="hand" /></div></div>;
      return <div key={i} className="flex w-[33px] shrink-0 justify-center"><Icon n={it} /></div>;
    })}
  </div>
);

/* A menu caption: the character after "&" is the underlined mnemonic. */
const MenuItem = ({ t, w }: { t: string; w: string }) => {
  const i = t.indexOf('&');
  if (i < 0) return <span className={`${w} shrink-0`}>{t}</span>;
  return (
    <span className={`${w} shrink-0`}>
      {t.slice(0, i)}<span className="underline underline-offset-2">{t[i + 1]}</span>{t.slice(i + 2)}
    </span>
  );
};

const WindowControls = ({ restore = false }: { restore?: boolean }) => (
  <div className="flex items-center text-[#777]">
    {[
      'M0 5.500h9',
      restore ? 'M.5 2.500h6v6h-6zM2.500 2.500v-1.500q0-.5.5-.5h5q.5 0 .5.5v5q0 .5-.5.5h-1.500' : 'M.5 1.500q0-1 1-1h6q1 0 1 1v6q0 1-1 1h-6q-1 0-1-1z',
      'M.5.5l9 9M9.500.5l-9 9',
    ].map((d) => (
      <div key={d} className="flex w-[45.500px] justify-center">
        <svg viewBox="0 0 10 10" className="size-[10px] overflow-visible"><path d={d} fill="none" stroke="currentColor" /></svg>
      </div>
    ))}
  </div>
);

const DockButtons = () => (
  <div className="flex gap-[3px]">
    <svg viewBox="0 0 11 11" className="size-[11px]"><rect x=".5" y=".5" width="10" height="10" rx="2" fill="#f4f4f4" stroke="#666" /><rect x="4.500" y="2.500" width="4" height="4" fill="none" stroke="#666" strokeWidth=".9" /><rect x="2.500" y="4.500" width="4" height="4" fill="#f4f4f4" stroke="#666" strokeWidth=".9" /></svg>
    <svg viewBox="0 0 11 11" className="size-[11px]"><rect x=".5" y=".5" width="10" height="10" rx="2" fill="#f4f4f4" stroke="#666" /><path d="M3 3l5 5M8 3l-5 5" stroke="#555" strokeWidth="2" /></svg>
  </div>
);

const ScrollBar = ({ children }: Kids) => (
  <div className="flex w-[14px] shrink-0 flex-col border-l border-[#b4b4b4] bg-[#e6e6e6]">
    <div className="flex h-[14px] shrink-0 items-center justify-center border-b border-[#b4b4b4] bg-[#fafafa]"><ArrowUp /></div>
    {children}
    <div className="flex h-[14px] shrink-0 items-center justify-center border-t border-[#b4b4b4] bg-[#fafafa]"><ArrowDown /></div>
  </div>
);

const Check = ({ on = false, cls = '' }: { on?: boolean; cls?: string }) => (
  <div className={`flex size-[14px] shrink-0 items-center justify-center border border-[#b8b8b8] bg-white ${cls}`}>
    {on && <svg viewBox="0 0 10 10" className="size-[10px]"><path d="M1.500 5l2.500 3.500L8.500 1" fill="none" stroke="#000" strokeWidth="1.700" /></svg>}
  </div>
);

/* ---------- browser dock ---------- */

type Node = { l: number; icon: string; t: string; a?: 'r' | 'd'; sel?: boolean };
const TREE: Node[] = [
  { l: 0, icon: 'fav', t: 'Ulubione' },
  { l: 0, icon: 'bookmarks', t: 'Zakładki przestrzenne', a: 'r' },
  { l: 0, icon: 'home', t: 'Home', a: 'r' },
  { l: 0, icon: 'folder', t: 'C:\\ (Windows)', a: 'r' },
  { l: 0, icon: 'gpkgs', t: 'GeoPackage' },
  { l: 0, icon: 'feather', t: 'SpatiaLite' },
  { l: 0, icon: 'pg', t: 'PostgreSQL', a: 'd' },
  { l: 1, icon: 'conn', t: 'localhost', a: 'd' },
  { l: 2, icon: 'db', t: 'public', a: 'd' },
  { l: 3, icon: 'pts', t: 'airports', a: 'r' },
  { l: 3, icon: 'line', t: 'majrivers', a: 'r' },
  { l: 3, icon: 'pts', t: 'popp', a: 'r', sel: true },
  { l: 3, icon: 'line', t: 'railroads', a: 'r' },
  { l: 3, icon: 'poly', t: 'regions', a: 'r' },
  { l: 3, icon: 'line', t: 'rivers', a: 'r' },
  { l: 3, icon: 'poly', t: 'swamp', a: 'r' },
  { l: 3, icon: 'poly', t: 'trees', a: 'r' },
  { l: 0, icon: 'hana', t: 'SAP HANA' },
  { l: 0, icon: 'mssql', t: 'MS SQL Server' },
];
const INDENT = ['pl-[4px]', 'pl-[21px]', 'pl-[38px]', 'pl-[55px]'];
const SIZES = ['size-[20px]', 'size-[14px]', 'size-4', 'size-[20px]'];

const Browser = () => (
  <div className="flex h-[474px] shrink-0 flex-col">
    <div className="flex h-5 items-center justify-between pl-1 pr-[2px]"><span>Przeglądarka</span><DockButtons /></div>
    <div className="flex h-[30px] items-center gap-[9px] pb-[2px] pl-2">
      {['addsel', 'refresh', 'filter', 'collapse', 'info'].map((n) => <Icon key={n} n={n} s="size-4" />)}
    </div>
    <div className="flex h-[424px] overflow-hidden border border-[#b4b4b4] bg-white">
      <div className="flex grow flex-col overflow-hidden">
        {TREE.map((r, i) => (
          <div key={i} className={`flex h-[22px] shrink-0 items-center ${INDENT[r.l]} ${r.sel ? 'w-[184px] bg-[#efefef]' : ''}`}>
            <div className="flex w-4 shrink-0 items-center pl-px">
              {r.a === 'r' && <svg viewBox="0 0 4 8" className="ml-px h-2 w-1"><path d="M0 0v8l4-4z" fill="#555" /></svg>}
              {r.a === 'd' && <ArrowDown />}
            </div>
            <div className="flex w-5 shrink-0 justify-center"><Icon n={r.icon} s={SIZES[r.l]} /></div>
            <span className="ml-[6px] mt-[2px] whitespace-nowrap">{r.t}</span>
          </div>
        ))}
        <div className="ml-6 mt-[2px] h-2 w-3 shrink-0 rounded-t bg-[#d8dde2]" />
      </div>
      <ScrollBar>
        <div className="h-[278px] border-b border-[#b4b4b4] bg-linear-to-r from-white to-[#f4f4f4]" />
        <div className="grow" />
      </ScrollBar>
    </div>
  </div>
);

/* ---------- layers dock ---------- */

type Layer = { t: string; kind: 'sq' | 'pt' | 'ln'; c: string; h: string; mem?: boolean; on?: boolean; sel?: boolean };
const LAYERS: Layer[] = [
  { t: 'deciduous', kind: 'sq', c: '#a76f58', h: 'h-[21px]' },
  { t: 'evergreen', kind: 'sq', c: '#85b66f', h: 'h-[21px]' },
  { t: 'mixed_trees', kind: 'sq', c: '#7d8b8f', h: 'h-[21px]' },
  { t: 'trees', kind: 'sq', c: '#beb297', h: 'h-[21px]' },
  { t: 'Uproszczona geometria', kind: 'sq', c: '#d9ff42', h: 'h-[21px]', mem: true },
  { t: 'węzły', kind: 'pt', c: '#e8718d', h: 'h-[19px]', mem: true, on: true, sel: true },
  { t: 'railroads', kind: 'ln', c: '#93cdf5', h: 'h-[20px]', on: true },
  { t: 'Przecięcia_rail_majriv', kind: 'pt', c: '#fbf91c', h: 'h-[22px]', mem: true },
  { t: 'majrivers', kind: 'ln', c: '#87829a', h: 'h-[22px]' },
  { t: 'military_more_1400', kind: 'pt', c: '#f5e60a', h: 'h-[22px]' },
  { t: 'not_military_more_1400', kind: 'pt', c: '#a50010', h: 'h-[22px]' },
  { t: 'airports', kind: 'pt', c: '#fb9a1c', h: 'h-[22px]' },
  { t: 'Przycięte', kind: 'ln', c: '#dba1a1', h: 'h-[22px]', mem: true },
  { t: 'matanuska', kind: 'sq', c: '#987db7', h: 'h-[21px]' },
  { t: 'regions', kind: 'sq', c: '#bccf50', h: 'h-[21px]' },
];
const spacing = (r: Layer) => {
  if (r.sel) return 'text-black underline underline-offset-1 tracking-[-0.100px]';
  if (r.on) return 'text-black tracking-[-0.550px]';
  return `italic text-[#7f7f7f] ${r.t.includes('_more_') ? 'tracking-[0.180px]' : r.t.includes('_') ? 'tracking-[0.080px]' : 'tracking-[-0.020px]'}`;
};

const LayerRow = ({ r }: { r: Layer }) => (
  <div className={`flex shrink-0 items-center pl-7 ${r.h} ${r.sel ? 'bg-[#efefef]' : ''}`}>
    <Check on={r.on} cls="mb-px" />
    <div className="ml-[5px] flex w-5 shrink-0 justify-center">
      {r.kind === 'sq' && <svg viewBox="0 0 19 19" className="size-[19px]"><rect x=".5" y=".5" width="18" height="18" fill={r.c} stroke="#444" /></svg>}
      {r.kind === 'pt' && <svg viewBox="0 0 9 9" className="mb-px size-[9px]"><circle cx="4.500" cy="4.500" r="3.800" fill={r.c} stroke="#333" strokeWidth="1.100" /></svg>}
      {r.kind === 'ln' && <svg viewBox="0 0 19 2" className="mb-[2px] h-[2px] w-[19px]"><path d="M0 1h19" stroke={r.c} strokeWidth="2" /></svg>}
    </div>
    <span className={`grow whitespace-nowrap font-bold ${r.kind === 'pt' ? 'ml-[7px]' : 'ml-[6px]'} ${spacing(r)}`}>{r.t}</span>
    <div className={`mb-px flex size-[18px] shrink-0 items-center justify-center rounded-[3px] border border-[#e0e0e0] bg-[#f6f6f6] ${r.on ? 'mr-[5px]' : 'mr-[7px]'}`}>
      {r.mem ? (
        <svg viewBox="0 0 14 12" className="h-3 w-[14px] shrink-0"><path d="M3.500 .5v11M5.500.5v11M8.500.5v11M10.500.5v11" stroke="#8a8a8a" /><rect x="1.500" y="2.500" width="11" height="7" rx="1" fill="#f6f6f6" stroke="#6a6a6a" strokeWidth="1.200" /></svg>
      ) : (
        <svg viewBox="0 0 14 14" className="size-[14px] shrink-0"><circle cx="7" cy="7.500" r="5.500" fill="#e4e4e4" stroke="#bbb" /><path d="M7 2v11M1.500 7.500h11" stroke="#c4c4c4" /><path d="M4.500 4.500Q5 2 7 2t2.500 2.500Q9.500 6 8 7t-1 2" fill="none" stroke="#555" strokeWidth="1.900" /><rect x="6" y="10.500" width="2" height="2" fill="#555" /></svg>
      )}
    </div>
  </div>
);

const Layers = () => (
  <div className="flex flex-col">
    <div className="flex h-[22px] items-center justify-between pl-1 pr-[2px]"><span>Warstwy</span><DockButtons /></div>
    <div className="flex h-[29px] items-center gap-[9px] pb-[3px] pl-2">
      {['brush', 'addgroup', 'eye', 'filterdrop', 'eps'].map((n) => <Icon key={n} n={n} s="size-4" />)}
      <div className="-mx-1 flex w-[11px] justify-center"><ArrowDown /></div>
      {['expand', 'collapse', 'remove'].map((n) => <Icon key={n} n={n} s="size-4" />)}
    </div>
    <div className="flex h-[309px] overflow-hidden border border-[#b4b4b4] bg-white">
      <div className="flex grow flex-col overflow-hidden">
        <div className="-mt-[10px] flex flex-col">{LAYERS.map((r) => <LayerRow key={r.t} r={r} />)}</div>
      </div>
      <ScrollBar>
        <div className="h-[125px] border-b border-[#b4b4b4]" />
        <div className="grow bg-linear-to-r from-white to-[#f4f4f4]" />
      </ScrollBar>
    </div>
  </div>
);

/* ---------- map canvas ---------- */

type Pt = [number, number];
const shift = (oy: number, s: string): Pt[] =>
  s.split(' ').map((p) => {
    const [x, y] = p.split(',').map(Number);
    return [300 + x / 3, oy + y / 3];
  });

const TRACKS: Pt[][] = [
  shift(155, '563,150 572,152 585,158 597,170 625,173 640,182 651,201'),
  shift(155, '475,147 482,144'),
  shift(155, '273,210 280,195 288,183 308,178 330,172 348,164 366,152 378,140 390,123 408,102 425,90 440,88 457,96 463,108 476,118 484,120 502,120 513,112 522,124 516,146 512,140 524,134 537,134'),
  shift(155, '231,315 231,296 226,280 231,264 240,245 255,231'),
  shift(155, '240,358 240,340'),
  shift(155, '234,411 225,397'),
  shift(155, '210,438 224,433'),
  shift(155, '207,456 209,450'),
  shift(155, '236,517 225,504'),
  shift(155, '219,486 219,486'),
  shift(155, '246,555 246,543'),
  shift(155, '240,563 249,582'),
  shift(155, '263,602 275,615 283,630 303,627'),
  shift(155, '278,640 293,660 297,690 312,715 313,730 324,742'),
  shift(155, '314,760 320,778 321,797 324,820 308,832 311,848 295,860 275,878 262,888 253,905 244,930 234,943 222,960'),
  shift(155, '203,975 186,1000 178,1022 167,1045 160,1075 157,1092 180,1110 174,1122 165,1138 172,1145 157,1165 160,1183'),
  shift(540, '145,42 130,55 110,78 96,96'),
  shift(540, '85,118 77,128 83,158 71,180 72,205 78,240'),
  shift(540, '80,274 86,305 92,320 86,338 97,350 94,370 102,388 108,408 104,430'),
  shift(540, '102,460 105,490 103,510 118,535 135,560 152,570 175,582 183,595 210,596 236,600 255,597 275,602 300,608 321,601'),
  shift(540, '303,622 307,635 297,650 278,655 258,665 243,685 233,705 223,725 215,742 204,744'),
  shift(540, '190,752 182,768 171,774'),
  shift(540, '154,798 166,810 170,838 183,852 195,872 215,880 240,892 258,884 275,898 298,916 315,906 338,900 355,914 372,932 390,950 396,962 415,970 433,971 450,980 456,974'),
  shift(540, '396,962 388,985 380,1005 373,1015'),
  shift(540, '385,1030 378,1042 384,1058 373,1070 360,1089'),
  shift(540, '337,1095 325,1098 315,1107'),
  shift(540, '308,1130 306,1155 315,1168 318,1190 322,1215 320,1250'),
  shift(540, '318,1268 310,1285 306,1305'),
  shift(780, '3771,307 3775,295 3786,280 3784,262 3786,248 3800,246 3790,230 3790,210 3793,185 3798,163'),
];
const STEPS = [2.6, 0.9, 3.8, 1, 0.8, 4.6, 1.2, 2.4, 0.9, 4.1, 1.6];
const nodes = (pts: Pt[], seed: number): Pt[] => {
  const out: Pt[] = [];
  let k = seed;
  for (let i = 0; i < pts.length - 1; i++) {
    const [a, b] = [pts[i], pts[i + 1]];
    const len = Math.hypot(b[0] - a[0], b[1] - a[1]) || 0.1;
    for (let d = 0; d < len; d += STEPS[k++ % STEPS.length]) {
      const j = Math.sin(k * 2.3) * 0.5;
      out.push([a[0] + ((b[0] - a[0]) * d) / len + j, a[1] + ((b[1] - a[1]) * d) / len - j / 2]);
    }
  }
  out.push(pts[pts.length - 1]);
  return out;
};

const MapCanvas = () => (
  <div className="h-[840px] w-[1314px] shrink-0 overflow-hidden border border-[#b4b4b4] bg-white">
    <svg viewBox="302 161 1312 838" className="h-[838px] w-[1312px]">
      <path d="M379.500 272.500l-6 19M368 305l5 13M379 330l3 8M466 204l21 1M326 618v14M334 682v11" fill="none" stroke="#58b4f4" strokeWidth="1" />
      <g fill="#e8718d" stroke="#35252a" strokeWidth="1">
        {TRACKS.map((t, i) => nodes(t, i * 3).map(([x, y], j) => <circle key={`${i}-${j}`} cx={x} cy={y} r="3.800" />))}
      </g>
    </svg>
  </div>
);

/* ---------- group stats dialog ---------- */

const FieldRow = ({ icon, t, sel = false }: { icon: string; t: string; sel?: boolean }) => (
  <div className={`flex h-8 shrink-0 items-center pb-px pl-[5px] ${sel ? 'bg-[#efefef]' : ''}`}>
    <Icon n={icon} s="size-[26px]" />
    <span className="ml-2 mt-[3px] tracking-[-0.420px]">{t}</span>
  </div>
);
const FIELDS: [string, string][] = [
  ['note', 'fcodesc'], ['pie', 'gid'], ['pie', 'vertex_index'], ['pie', 'vertex_part'], ['pie', 'vertex_part_index'],
  ['bars', 'average'], ['bars', 'count'], ['bars', 'max'], ['bars', 'median'], ['bars', 'min'],
];

const Button = ({ cls, children }: Kids & { cls: string }) => (
  <div className={`flex items-center justify-center rounded-[3px] border border-[#a9a9a9] bg-linear-to-b from-[#fefefe] to-[#ececec] pt-px text-[11px] tracking-[-0.300px] ${cls}`}>{children}</div>
);
const Label = ({ cls = '', children }: Kids & { cls?: string }) => (
  <div className={`flex items-center whitespace-nowrap text-[11px] tracking-[-0.300px] ${cls}`}>{children}</div>
);

const StatsTable = () => (
  <div className="flex h-[675px] w-[252px] shrink-0 flex-col border border-[#b4b4b4] bg-white">
    <div className="flex h-[19px] shrink-0 bg-[#efefef]">
      <div className="w-[11px] border-b border-[#b4b4b4] bg-linear-to-b from-white to-[#ececec]" />
      <div className="flex w-[35px] items-center justify-end gap-[8px] border-b border-r border-[#b4b4b4] bg-linear-to-b from-white to-[#ececec] pr-1"><span>1</span><ArrowUp /></div>
      <div className="flex w-[35px] items-center justify-center border-b border-[#b4b4b4] bg-linear-to-b from-white to-[#ececec] pr-px">2</div>
    </div>
    <div className="flex grow">
      <div className="flex w-[11px] flex-col bg-[#efefef]">
        {['1', '2'].map((n) => <div key={n} className="flex h-[37px] items-center justify-center border-b border-r border-[#b4b4b4] bg-linear-to-r from-white to-[#ececec] pt-[2px]">{n}</div>)}
      </div>
      <div className="grid h-[74px] w-[70px] grid-cols-2 grid-rows-2">
        <div className="border-b border-r border-[#c4c4c4] bg-[#f5eae9]" />
        <div className="border-b border-r border-[#c4c4c4] bg-[#f5eae9]" />
        <div className="border-b border-r border-[#c4c4c4] bg-[#f5eae9]" />
        <div className="flex items-center justify-end border-b border-r border-[#c4c4c4] pr-[3px] pt-[2px] tracking-[-0.650px]">662</div>
      </div>
    </div>
  </div>
);

const GroupStats = () => (
  <div className="absolute left-[1163px] top-[28px] flex h-[770px] w-[584px] flex-col overflow-hidden rounded-lg border border-[#adadad] bg-[#efefef] shadow-[0_28px_48px_rgba(0,0,0,0.24),0_2px_16px_rgba(0,0,0,0.12)]">
    <div className="flex h-[30px] shrink-0 items-center bg-[#f3f3f3] pl-[7px] text-[#8a8a8a]">
      <QLogo /><span className="ml-[6px] grow tracking-[-0.350px]">Group Stats</span><WindowControls />
    </div>
    <div className="flex h-5 shrink-0 items-center border-b border-[#d4d4d4] pl-[10px] text-[#9b9b9b]">
      <MenuItem t="&Data" w="w-[39px]" /><MenuItem t="Feat&ures" w="w-[59px]" /><MenuItem t="W&indow" w="w-[59px]" /><MenuItem t="He&lp" w="w-10" />
    </div>
    <div className="flex grow">
      <div className="flex w-[283px] shrink-0 flex-col pl-[10px] pt-[11px]">
        <StatsTable />
        <div className="-ml-[5px] mt-[14px] whitespace-pre tracking-[-0.480px]">Calculate... 100% |  generate view...100% |  done.</div>
      </div>
      <div className="flex grow flex-col pr-[11px]">
        <div className="-mr-[9px] flex h-[20px] items-center justify-between pl-px"><span className="tracking-[-0.400px]">Control panel</span><DockButtons /></div>
        <div className="flex pl-2">
          <div className="flex grow flex-col">
            <Label cls="h-[29px] pt-[4px]">Layers</Label>
            <div className="flex h-6 items-center justify-between rounded-[3px] border border-[#a9a9a9] bg-linear-to-b from-[#fefefe] to-[#ececec] pl-1 pr-[7px] text-[11px] tracking-[-0.400px]"><span>węzły</span><ArrowDown /></div>
            <Label cls="h-[26px]">Fields</Label>
            <div className="flex h-[327px] border border-[#b4b4b4] bg-white">
              <div className="flex grow flex-col overflow-hidden">
                {FIELDS.map(([ic, t]) => <FieldRow key={t} icon={ic} t={t} sel={t === 'count'} />)}
                <div className="ml-[22px] mt-[3px] h-[3px] w-2 shrink-0 rounded-t-[3px] bg-[#92bc54]" />
              </div>
              <ScrollBar>
                <div className="h-[89px] border-b border-[#b4b4b4]" />
                <div className="h-[149px] border-b border-[#b4b4b4] bg-linear-to-r from-white to-[#f4f4f4]" />
                <div className="grow" />
              </ScrollBar>
            </div>
            <div className="mt-[7px] grid grid-cols-[136px_137px] gap-x-[7px]">
              <div className="h-[26px]"><Button cls="h-[19px] w-9">Filter</Button></div>
              <Label cls="h-[19px] pt-[2px]">Columns</Label>
              <div className="h-[70px] border border-[#b4b4b4] bg-white" />
              <div className="h-[70px] border border-[#b4b4b4] bg-white" />
              <Label cls="h-8 pt-[2px]">Rows</Label>
              <Label cls="h-8 pt-[2px]"><span className="w-[39px]">Value</span><Check cls="mb-[3px]" /><span className="ml-[5px] tracking-[-0.650px]">use NULL values</span></Label>
              <div className="h-[70px] border border-[#b4b4b4] bg-white" />
              <div className="flex h-[70px] flex-col border border-[#b4b4b4] bg-white pt-px"><FieldRow icon="bars" t="count" /><FieldRow icon="pie" t="gid" /></div>
            </div>
            <div className="mt-[7px] flex h-5 items-center">
              <Check /><Label cls="ml-[5px] grow pt-px"><span className="tracking-[-0.720px]">Use only selected features</span></Label><Button cls="h-5 w-20">Clear</Button>
            </div>
            <Button cls="mt-[7px] h-5">Calculate</Button>
          </div>
        </div>
      </div>
    </div>
    <Grip cls="absolute left-[277px] top-[391px]" />
    <div className="absolute bottom-[2px] right-[2px] size-[11px] bg-[radial-gradient(#aaa_0.800px,transparent_1px)] bg-[length:3px_3px] [clip-path:polygon(100%_0,100%_100%,0_100%)]" />
  </div>
);

/* ---------- page ---------- */

export default function App() {
  return (
    <div className="relative flex h-[1001px] w-[1920px] flex-col overflow-hidden bg-[#efefef] font-['Open_Sans',sans-serif] text-[12px] leading-4 tracking-[-0.450px] text-black">
      <div className="flex h-[23px] shrink-0 items-center justify-between bg-[#f3f3f3] pl-[2px] text-[#808080]">
        <div className="flex items-center gap-[6px]"><QLogo /><span className="tracking-[-0.330px]">*Projekt bez nazwy — QGIS</span></div>
        <div className="mb-[3px] mr-[2px] flex"><WindowControls restore /></div>
      </div>
      <div className="flex h-5 shrink-0 items-center border-b border-[#d4d4d4] pl-[11px] text-[#9b9b9b]">
        <MenuItem t="Projekt" w="w-[52px]" />
        <MenuItem t="&Edycja" w="w-[49px]" />
        <MenuItem t="&Widok" w="w-[49px]" />
        <MenuItem t="W&arstwa" w="w-[60px]" />
        <MenuItem t="&Ustawienia" w="w-[72px]" />
        <MenuItem t="&Wtyczki" w="w-[56px]" />
        <MenuItem t="Wekt&or" w="w-[53px]" />
        <MenuItem t="&Raster" w="w-[47px]" />
        <MenuItem t="&Baza danych" w="w-[81px]" />
        <MenuItem t="W &internecie" w="w-[81px]" />
        <MenuItem t="Siatka" w="w-[46px]" />
        <MenuItem t="Pro&cessing" w="w-[72px]" />
        <MenuItem t="&Pomoc" w="w-[50px]" />
      </div>
      <Toolbar items="newdoc open save newlayout layouts style # hand pan zoomin zoomout zoomfull zoomsel zoomlayer zoomnative zoomprev zoomnext newmap new3d bookmarknew bookmarks clock refresh # identify abacus gear sigma table v measure v tip action w" />
      <Toolbar items="dsm gpkg shp spatialite memory mesh vlayer # edits edit saveedit addpt vertex v multiedit trash cut copy paste undo redo # label diagram | labelpin labelred | g1 g2 g3 g4 g5 # globeadd globefind globebino # python" />
      <Toolbar items="select v selform v desel v selloc # e1 e2 w e3 e4 w # annot v annsel annpoly annline annstar anntext | balloon v" />
      <div className="flex h-[841px] shrink-0">
        <div className="flex w-[301px] shrink-0">
          <div className="flex w-[294px] shrink-0 flex-col">
            <Browser />
            <div className="flex h-[6px] shrink-0 items-center justify-center"><Grip vertical={false} /></div>
            <Layers />
          </div>
          <div className="flex w-[7px] items-center justify-center"><Grip /></div>
        </div>
        <MapCanvas />
        <div className="ml-[7px] flex w-[298px] shrink-0 flex-col">
          <div className="flex h-[19px] shrink-0 items-center justify-end pr-[2px]"><DockButtons /></div>
          <div className="h-[408px] shrink-0 border border-[#b4b4b4] bg-white" />
          <div className="flex h-[5px] shrink-0 items-center justify-center"><Grip vertical={false} /></div>
          <div className="h-[408px] shrink-0 border border-[#b4b4b4] bg-white" />
        </div>
      </div>
      <GroupStats />
    </div>
  );
}
